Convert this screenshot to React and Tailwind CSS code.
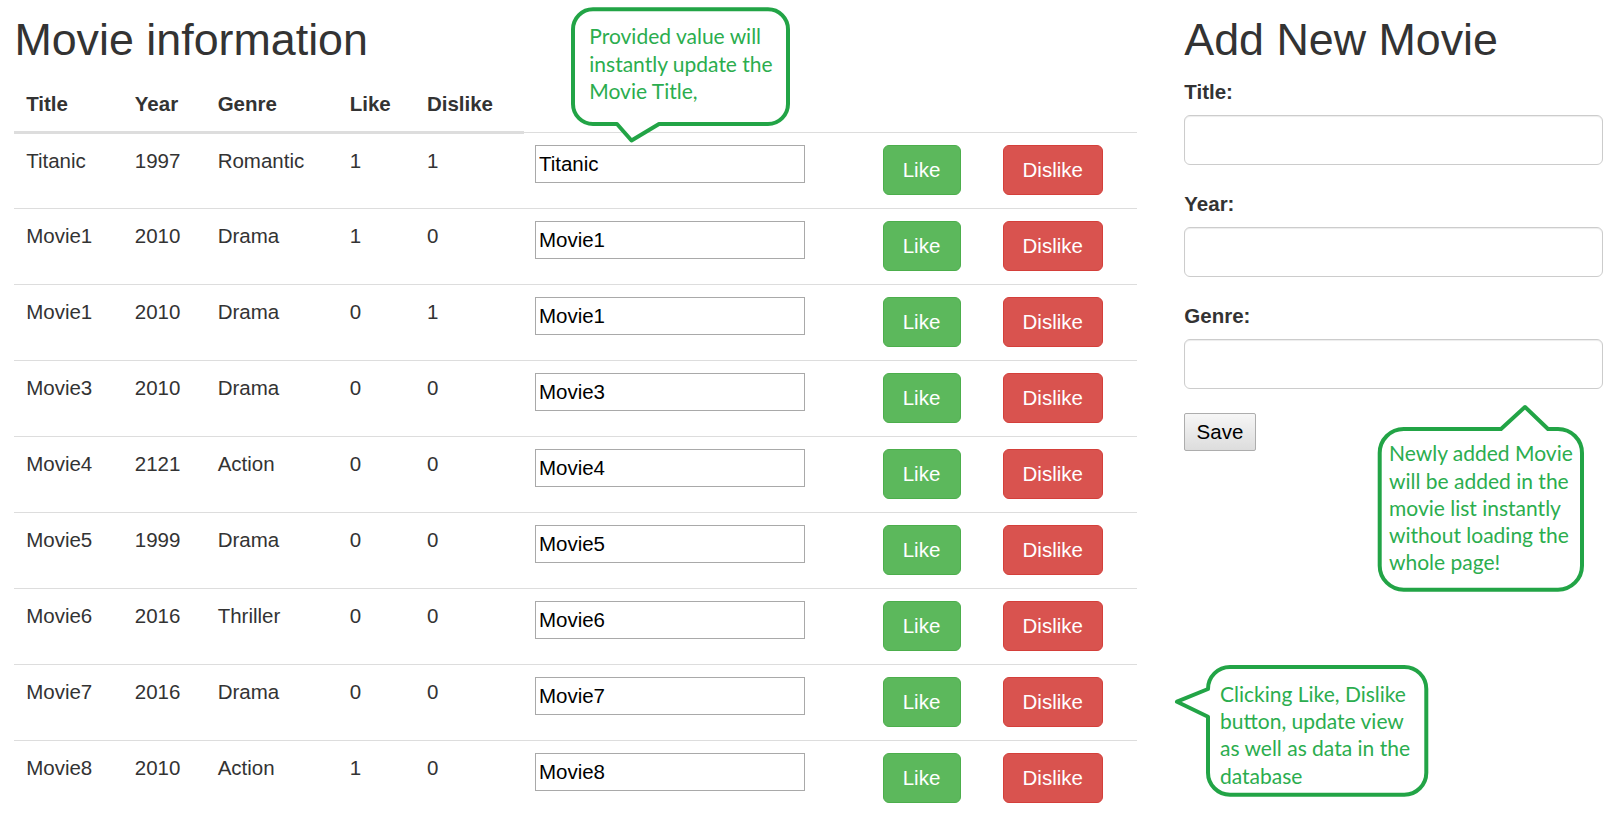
import React from "react";

const movies = [
  ["Titanic", "1997", "Romantic", "1", "1"],
  ["Movie1", "2010", "Drama", "1", "0"],
  ["Movie1", "2010", "Drama", "0", "1"],
  ["Movie3", "2010", "Drama", "0", "0"],
  ["Movie4", "2121", "Action", "0", "0"],
  ["Movie5", "1999", "Drama", "0", "0"],
  ["Movie6", "2016", "Thriller", "0", "0"],
  ["Movie7", "2016", "Drama", "0", "0"],
  ["Movie8", "2010", "Action", "1", "0"],
];

const td = "border-t border-[#ddd] px-[11.8px] pt-[12px] pb-[13px] align-top";

function FormGroup({ label }) {
  return (
    <div className="mb-[24.5px]">
      <label className="block font-bold text-[20.5px] leading-[29px] mb-[9px] text-[#333]">{label}</label>
      <input
        className="block w-[419px] h-[49.5px] rounded-[6px] border-[1.5px] border-[#ccc] bg-white shadow-[inset_0_1px_1px_rgba(0,0,0,0.075)] px-[17px] text-[20.5px] outline-none"
        defaultValue=""
      />
    </div>
  );
}

export default function App() {
  return (
    <div className="relative w-[1617px] h-[813px] overflow-hidden bg-white font-['Liberation_Sans',Arial,sans-serif] text-[#333]">
      <div className="flex pl-[14.4px]">
        {/* Left: movie table */}
        <div className="w-[1123px] shrink-0">
          <h2 className="text-[44.8px] leading-[49px] mt-[15px] mb-[13px] font-normal text-[#333]">Movie information</h2>
          <table className="table-fixed border-collapse w-[1123px] text-[20.5px] leading-[29.4px]">
            <colgroup>
              <col className="w-[108.6px]" />
              <col className="w-[82.8px]" />
              <col className="w-[132px]" />
              <col className="w-[77.2px]" />
              <col className="w-[108.5px]" />
              <col className="w-[347px]" />
              <col className="w-[120px]" />
              <col className="w-[146.5px]" />
            </colgroup>
            <thead>
              <tr>
                {["Title", "Year", "Genre", "Like", "Dislike"].map((h) => (
                  <th
                    key={h}
                    className="text-left font-bold px-[11.8px] pt-[12px] pb-[13px] border-b-[3px] border-[#ddd] align-bottom"
                  >
                    {h}
                  </th>
                ))}
              </tr>
            </thead>
            <tbody>
              {movies.map((m, i) => (
                <tr key={i}>
                  {m.map((c, j) => (
                    <td key={j} className={td}>
                      {c}
                    </td>
                  ))}
                  <td className={td}>
                    <input
                      defaultValue={m[0]}
                      className="block w-[270px] h-[38px] border border-[#a9a9a9] bg-white px-[2.5px] text-black text-[20.5px] outline-none"
                    />
                  </td>
                  <td className={td}>
                    <button className="block w-[78px] h-[50px] rounded-[6px] bg-[#5cb85c] border border-[#4cae4c] text-white text-[20.5px] pb-[2px]">
                      Like
                    </button>
                  </td>
                  <td className={td}>
                    <button className="block w-[100.4px] h-[50px] rounded-[6px] bg-[#d9534f] border border-[#d43f3a] text-white text-[20.5px] pb-[2px]">
                      Dislike
                    </button>
                  </td>
                </tr>
              ))}
            </tbody>
          </table>
        </div>

        {/* Right: add form */}
        <div className="ml-[46.9px] w-[419px] shrink-0">
          <h2 className="text-[44.8px] leading-[49px] mt-[15px] mb-[13px] font-normal text-[#333]">Add New Movie</h2>
          <FormGroup label="Title:" />
          <FormGroup label="Year:" />
          <FormGroup label="Genre:" />
          <button className="block w-[71.4px] h-[38.4px] border border-[#adadad] rounded-[2px] bg-linear-to-b from-[#f6f6f6] to-[#dddddd] text-[20.5px] text-black">
            Save
          </button>
        </div>
      </div>

      {/* Annotation callouts */}
      <svg
        className="absolute left-0 top-0 pointer-events-none"
        width="1617"
        height="813"
        viewBox="0 0 1617 813"
      >
        <path
          d="M 593 9.3 H 768 A 20 20 0 0 1 788 29.3 V 104 A 20 20 0 0 1 768 124 H 659 L 631.5 140.5 L 617 124 H 593 A 20 20 0 0 1 573 104 V 29.3 A 20 20 0 0 1 593 9.3 Z"
          fill="white"
          stroke="#22a446"
          strokeWidth="4"
          strokeLinejoin="round"
        />
        <path
          d="M 1403.7 429 H 1501 L 1525 407 L 1548 429 H 1558 A 24 24 0 0 1 1582 453 V 565.7 A 24 24 0 0 1 1558 589.7 H 1403.7 A 24 24 0 0 1 1379.7 565.7 V 453 A 24 24 0 0 1 1403.7 429 Z"
          fill="white"
          stroke="#22a446"
          strokeWidth="4"
          strokeLinejoin="round"
        />
        <path
          d="M 1230 667 H 1404.3 A 22 22 0 0 1 1426.3 689 V 772.7 A 22 22 0 0 1 1404.3 794.7 H 1230 A 22 22 0 0 1 1208 772.7 V 716.7 L 1177 701.7 L 1208 689 A 22 22 0 0 1 1230 667 Z"
          fill="white"
          stroke="#22a446"
          strokeWidth="4"
          strokeLinejoin="round"
        />
      </svg>

      <div className="absolute left-[589.3px] top-[22.3px] font-['Lato',sans-serif] text-[21px] leading-[27.2px] text-[#2bad4e] whitespace-nowrap">
        Provided value will
        <br />
        instantly update the
        <br />
        Movie Title,
      </div>
      <div className="absolute left-[1389px] top-[439.3px] font-['Lato',sans-serif] text-[21px] leading-[27.2px] text-[#2bad4e] whitespace-nowrap">
        Newly added Movie
        <br />
        will be added in the
        <br />
        movie list instantly
        <br />
        without loading the
        <br />
        whole page!
      </div>
      <div className="absolute left-[1220px] top-[680px] font-['Lato',sans-serif] text-[21px] leading-[27.2px] text-[#2bad4e] whitespace-nowrap">
        Clicking Like, Dislike
        <br />
        button, update view
        <br />
        as well as data in the
        <br />
        database
      </div>
    </div>
  );
}
